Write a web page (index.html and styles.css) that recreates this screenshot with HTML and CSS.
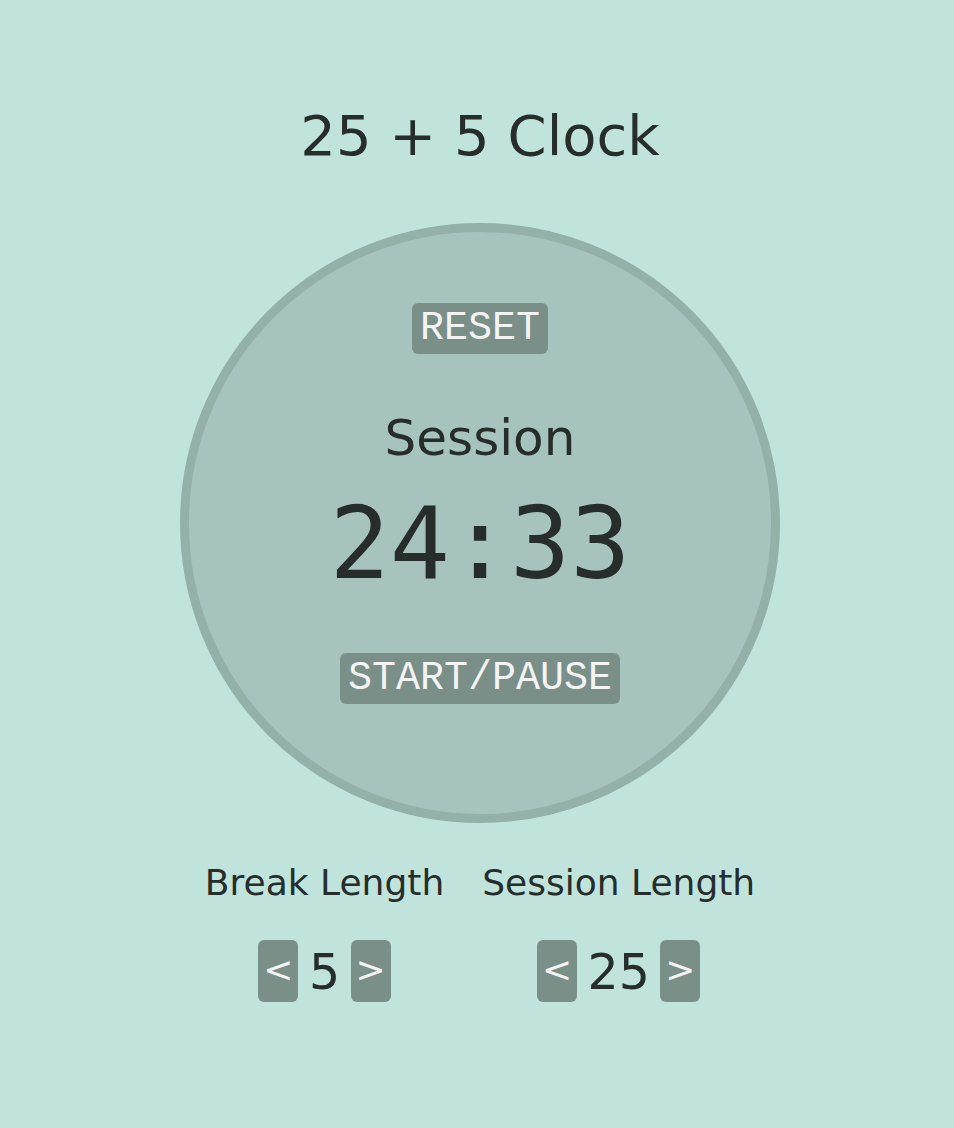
FILE: index.html
```html
<!DOCTYPE html>
<html lang="en">
<head>
<meta charset="utf-8">
<title>25 + 5 Clock</title>
<link rel="stylesheet" href="styles.css">
</head>
<body>
<main class="app">
  <h1 class="title">25 + 5 Clock</h1>
  <section class="dial">
    <button class="btn-text" id="reset">RESET</button>
    <div class="timer-label" id="timer-label">Session</div>
    <div class="time-left" id="time-left">24:33</div>
    <button class="btn-text btn-start" id="start_stop">START/PAUSE</button>
  </section>
  <section class="controls">
    <div class="control">
      <div class="control-label" id="break-label">Break Length</div>
      <div class="stepper">
        <button class="btn-step" id="break-decrement">&lt;</button>
        <span class="step-value" id="break-length">5</span>
        <button class="btn-step" id="break-increment">&gt;</button>
      </div>
    </div>
    <div class="control">
      <div class="control-label" id="session-label">Session Length</div>
      <div class="stepper">
        <button class="btn-step" id="session-decrement">&lt;</button>
        <span class="step-value" id="session-length">25</span>
        <button class="btn-step" id="session-increment">&gt;</button>
      </div>
    </div>
  </section>
</main>
</body>
</html>
```
FILE: styles.css
```css
html, body {
  margin: 0;
  padding: 0;
}
body {
  background: #c0e4dc;
  color: #262d2b;
  font-family: "DejaVu Sans", Verdana, sans-serif;
}
.app {
  display: flex;
  flex-direction: column;
  align-items: center;
  padding-left: 6px;
}
.title {
  margin: 103px 0 0;
  font-size: 56px;
  font-weight: normal;
  line-height: 65px;
}
.dial {
  box-sizing: border-box;
  margin-top: 55px;
  width: 600px;
  height: 600px;
  border: 9px solid #94b1a9;
  border-radius: 50%;
  background: #a6c3bd;
  display: flex;
  flex-direction: column;
  align-items: center;
  padding-top: 71px;
}
.dial > * { flex: none; }
.btn-text {
  font-family: "Liberation Mono", "Courier New", monospace;
  font-size: 40px;
  line-height: 45px;
  padding: 3px 8px;
  border: 0;
  border-radius: 6px;
  background: #7a8f88;
  color: #f4f4f4;
}
.timer-label {
  margin-top: 55px;
  font-size: 50px;
  line-height: 58px;
}
.time-left {
  margin-top: 19px;
  font-family: "DejaVu Sans Mono", monospace;
  font-size: 100px;
  line-height: 116px;
}
.btn-start {
  margin-top: 51px;
}
.controls {
  margin-top: 39px;
  display: flex;
  gap: 38px;
}
.control {
  display: flex;
  flex-direction: column;
  align-items: center;
}
.control-label {
  font-size: 36px;
  line-height: 42px;
}
.stepper {
  margin-top: 36px;
  display: flex;
  align-items: flex-start;
}
.btn-step {
  width: 40px;
  height: 62px;
  padding: 0 0 3px;
  border: 0;
  border-radius: 6px;
  background: #7a8f88;
  color: #f4f4f4;
  font-family: "DejaVu Sans", sans-serif;
  font-size: 36px;
  line-height: 1;
}
.step-value {
  margin: 4px 10.5px 0;
  font-size: 49px;
  line-height: 57px;
}
```
